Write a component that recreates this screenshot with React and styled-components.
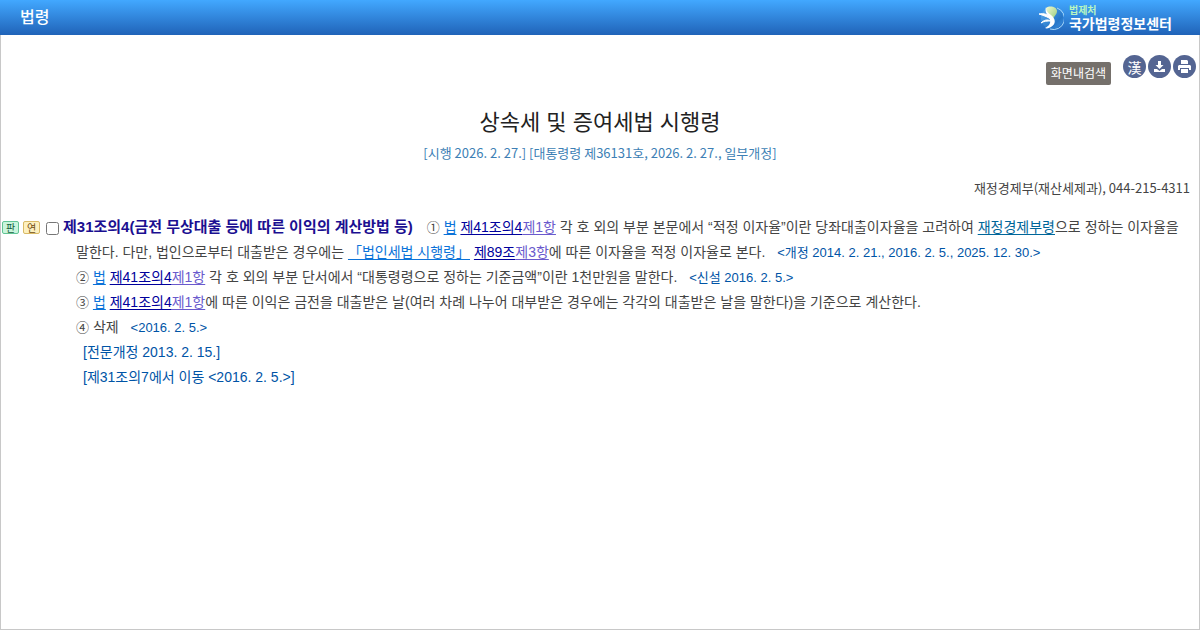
import styled, { createGlobalStyle } from "styled-components";

const GlobalStyle = createGlobalStyle`
    * {
        box-sizing: border-box;
    }

    body {
        margin: 0;
        background: #fff;
        color: #444;
        font-family: "Liberation Sans", "Noto Sans CJK KR", sans-serif;
        font-size: 14px;
        line-height: 25px;
        word-break: keep-all;
    }
`;

const Page = styled.div`
    min-height: 100vh;
    display: flex;
    flex-direction: column;
`;

const Header = styled.header`
    display: flex;
    justify-content: space-between;
    align-items: center;
    height: 35px;
    padding: 0 28px 0 20px;
    background: linear-gradient(#42a8ff, #2063b8);
    color: #fff;
`;

const HeaderTitle = styled.h1`
    margin: 0;
    font-size: 16px;
    line-height: 20px;
    font-weight: 500;
`;

const Brand = styled.a`
    display: flex;
    align-items: center;
    gap: 5px;
    color: #fff;
    text-decoration: none;
`;

const BrandText = styled.span`
    display: flex;
    flex-direction: column;
    font-size: 14px;
    line-height: 14px;
    font-weight: 700;
`;

const BrandOffice = styled.span`
    color: #b8f5c0;
    font-size: 10px;
    line-height: 13px;
`;

const Content = styled.main`
    flex: 1;
    border: 1px solid #c8c8c8;
    border-top: 0;
`;

const Toolbar = styled.div`
    display: flex;
    justify-content: flex-end;
    align-items: flex-start;
    gap: 2px;
    padding: 20px 3px 0;
`;

const SearchButton = styled.button`
    height: 23px;
    margin: 7px 10px 0 0;
    padding: 0 5px 1px;
    border: 0;
    border-radius: 2px;
    background: #75706b;
    color: #fff;
    font: 12px/20px "Noto Sans CJK KR", sans-serif;
`;

const RoundButton = styled.button`
    display: flex;
    align-items: center;
    justify-content: center;
    width: 23px;
    height: 23px;
    padding: 0;
    border: 0;
    border-radius: 50%;
    background: #546592;
    color: #fff;
    font: 14px/20px "Noto Sans CJK KR", sans-serif;
`;

const LawTitle = styled.h2`
    margin: 24px 0 0;
    color: #222;
    font-size: 22px;
    line-height: 28px;
    font-weight: 400;
    text-align: center;
`;

const LawInfo = styled.p`
    margin: 3px 0 0;
    color: #3d7fb5;
    font-family: "Noto Sans CJK KR", sans-serif;
    font-size: 13px;
    text-align: center;
`;

const Department = styled.p`
    margin: 10px 9px 0;
    font-family: "Noto Sans CJK KR", sans-serif;
    font-size: 13px;
    text-align: right;
`;

const Article = styled.article`
    display: grid;
    grid-template-columns: 45px 1fr;
    padding: 15px 8px 0 1px;
`;

const Badges = styled.div`
    display: flex;
    align-items: center;
    gap: 4px;
    height: 25px;
`;

const Badge = styled.button`
    width: 17px;
    height: 13px;
    padding: 0;
    border: 1px solid ${(props) => (props.$green ? "#62c495" : "#d9ba67")};
    border-radius: 2px;
    background: ${(props) => (props.$green ? "#c9f5dc" : "#fdf0bf")};
    color: ${(props) => (props.$green ? "#17623c" : "#704d10")};
    font: 10px/10px "Noto Sans CJK KR", sans-serif;
`;

const Paragraph = styled.p`
    margin: 0;
    padding-left: ${(props) => (props.$note ? "36px" : "29px")};
    color: ${(props) => (props.$note ? "#0054a6" : "#444")};
`;

const FirstParagraph = styled(Paragraph)`
    text-indent: -30px;
`;

const Check = styled.input`
    width: 13px;
    height: 13px;
    margin: 0 4px 0 0;
    vertical-align: -3px;
`;

const ArticleName = styled.label`
    margin-right: 10px;
    color: #1b0f91;
    font-size: 15px;
    line-height: 16px;
    font-weight: 700;
`;

const Num = styled.span`
    font-size: 13px;
    line-height: 16px;
`;

const LawLink = styled.a`
    color: ${(props) => props.$color || "#0b73d9"};
    text-decoration: underline;
    text-underline-offset: 2px;
`;

const Revision = styled.span`
    margin-left: 8px;
    color: #0054a6;
    font-size: 13px;
    line-height: 16px;
`;

const Logo = () => (
    <svg width="26" height="26" viewBox="0 0 26 26" aria-hidden="true">
        <defs>
            <linearGradient id="globe" x1="0" y1="0" x2="1" y2="1">
                <stop offset="0" stopColor="#5db0f0" />
                <stop offset="0.7" stopColor="#2676c8" />
                <stop offset="1" stopColor="#3f93e0" />
            </linearGradient>
            <linearGradient id="leaf" x1="0" y1="0" x2="1" y2="1">
                <stop offset="0" stopColor="#f4fad0" />
                <stop offset="1" stopColor="#8fc878" />
            </linearGradient>
        </defs>
        <circle cx="14" cy="13" r="11" fill="url(#globe)" />
        <path d="M19 3a11 11 0 0 1-7 21" fill="none" stroke="#a9d8f8" />
        <path d="M8 3c4-3 11-1 11 3 0 5-5 5-4 11l-4-6c-2-3-3-4-3-8z" fill="url(#leaf)" />
        <path d="M8 2c0 4 2 6 5 8 5 4 5 9 0 12-2 1-4 2-6 1 4-2 6-5 5-8C11 11 6 8 8 2z" fill="#fff" />
        <path d="M1 9c5-1 10 0 13 6-4-3-7-4-13-6z" fill="#fff" stroke="#fff" />
        <path d="M3 18c3-3 6-4 10-2-4 0-7 0-10 2z" fill="#fff" stroke="#fff" />
    </svg>
);

const JoLink = () => (
    <>
        <LawLink href="#law">법</LawLink>{" "}
        <LawLink href="#jo" $color="#00009c">제41조의4</LawLink>
        <LawLink href="#hang" $color="#6a5acd">제1항</LawLink>
    </>
);

const App = () => {
    return (
        <Page>
            <GlobalStyle />
            <Header>
                <HeaderTitle>법령</HeaderTitle>
                <Brand href="#home">
                    <Logo />
                    <BrandText>
                        <BrandOffice>법제처</BrandOffice>
                        국가법령정보센터
                    </BrandText>
                </Brand>
            </Header>
            <Content>
                <Toolbar>
                    <SearchButton>화면내검색</SearchButton>
                    <RoundButton>漢</RoundButton>
                    <RoundButton aria-label="저장">
                        <svg width="13" height="13" viewBox="0 0 13 13" fill="currentColor">
                            <path d="M5 1h3v4h2.500L6.500 9 2.500 5H5z" />
                            <path d="M1 9h3l2.500 2L9 9h3v3H1z" />
                        </svg>
                    </RoundButton>
                    <RoundButton aria-label="인쇄">
                        <svg width="13" height="13" viewBox="0 0 13 13" fill="currentColor">
                            <path d="M3 0h6l1 1v3H3z" />
                            <path d="M1 5h11l1 1v4h-2V8H2v2H0V6z" />
                            <path d="M3 9h7v4H3z" />
                        </svg>
                    </RoundButton>
                </Toolbar>
                <LawTitle>상속세 및 증여세법 시행령</LawTitle>
                <LawInfo>[시행 2026. 2. 27.] [대통령령 제36131호, 2026. 2. 27., 일부개정]</LawInfo>
                <Department>재정경제부(재산세제과), 044-215-4311</Department>
                <Article>
                    <Badges>
                        <Badge $green>판</Badge>
                        <Badge>연</Badge>
                    </Badges>
                    <div>
                        <FirstParagraph>
                            <Check type="checkbox" id="jo31" />
                            <ArticleName htmlFor="jo31">제31조의4(금전 무상대출 등에 따른 이익의 계산방법 등)</ArticleName>
                            {" "}<Num>①</Num> <JoLink /> 각 호 외의 부분 본문에서 “적정 이자율”이란 당좌대출이자율을 고려하여{" "}
                            <LawLink href="#rule" $color="#006699">재정경제부령</LawLink>으로 정하는 이자율을{" "}
                            <span>말한다. 다만, 법인으로부터 대출받은 경우에는 </span>
                            <LawLink href="#tax">「법인세법 시행령」</LawLink>{" "}
                            <LawLink href="#jo89" $color="#00009c">제89조</LawLink>
                            <LawLink href="#hang3" $color="#6a5acd">제3항</LawLink>에 따른 이자율을 적정 이자율로 본다.{" "}
                            <Revision>&lt;개정 2014. 2. 21., 2016. 2. 5., 2025. 12. 30.&gt;</Revision>
                        </FirstParagraph>
                        <Paragraph>
                            <Num>②</Num> <JoLink /> 각 호 외의 부분 단서에서 “대통령령으로 정하는 기준금액”이란 1천만원을 말한다.{" "}
                            <Revision>&lt;신설 2016. 2. 5.&gt;</Revision>
                        </Paragraph>
                        <Paragraph>
                            <Num>③</Num> <JoLink />에 따른 이익은 금전을 대출받은 날(여러 차례 나누어 대부받은 경우에는 각각의 대출받은 날을 말한다)을 기준으로 계산한다.
                        </Paragraph>
                        <Paragraph>
                            <Num>④</Num> 삭제 <Revision>&lt;2016. 2. 5.&gt;</Revision>
                        </Paragraph>
                        <Paragraph $note>[전문개정 2013. 2. 15.]</Paragraph>
                        <Paragraph $note>[제31조의7에서 이동 &lt;2016. 2. 5.&gt;]</Paragraph>
                    </div>
                </Article>
            </Content>
        </Page>
    );
};

export default App;
